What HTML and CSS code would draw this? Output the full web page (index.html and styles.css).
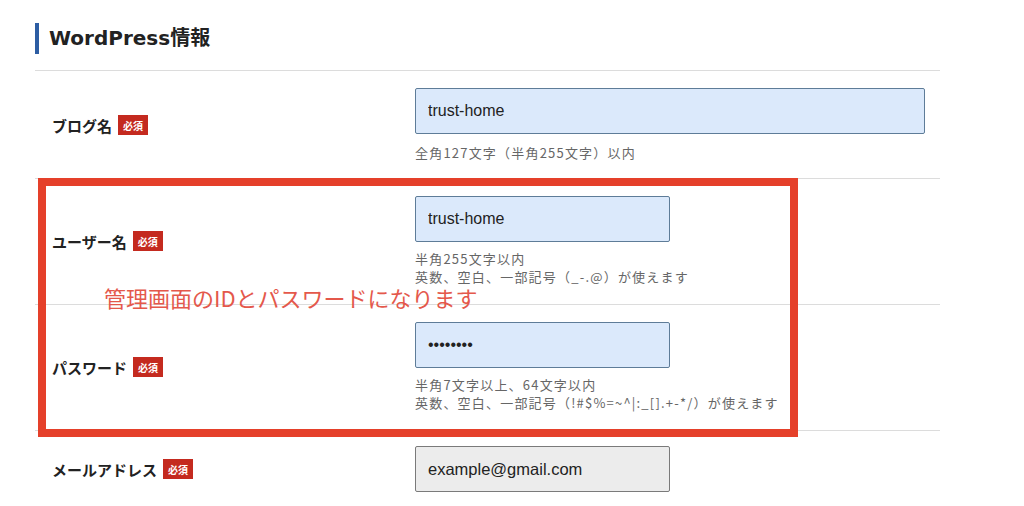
FILE: index.html
```html
<!DOCTYPE html>
<html>
<head>
    <title>WordPress情報</title>
    <link rel="stylesheet" href="styles.css">
</head>
<body>
    <div class="page">
        <h2 class="section-title">WordPress情報</h2>

        <div class="form">
            <div class="row">
                <div class="label">ブログ名<span class="req">必須</span></div>
                <div class="field">
                    <input class="input wide" type="text" value="trust-home">
                    <p class="hint single">全角127文字（半角255文字）以内</p>
                </div>
            </div>

            <div class="row">
                <div class="label">ユーザー名<span class="req">必須</span></div>
                <div class="field">
                    <input class="input" type="text" value="trust-home">
                    <p class="hint">半角255文字以内<br>英数、空白、一部記号（_-.@）が使えます</p>
                </div>
            </div>

            <div class="row">
                <div class="label">パスワード<span class="req">必須</span></div>
                <div class="field">
                    <input class="input" type="password" value="password">
                    <p class="hint">半角7文字以上、64文字以内<br>英数、空白、一部記号（!#$%=~^|:_[].+-*/）が使えます</p>
                </div>
            </div>

            <div class="row last">
                <div class="label">メールアドレス<span class="req">必須</span></div>
                <div class="field">
                    <input class="input locked" type="text" value="example@gmail.com" readonly>
                </div>
            </div>
        </div>
    </div>

    <!-- annotation drawn over the form -->
    <div class="callout"></div>
    <p class="callout-note">管理画面のIDとパスワードになります</p>
</body>
</html>
```

FILE: styles.css
```css
body {
    margin: 0;
    background-color: #fff;
    color: #222;
    font-family: 'Noto Sans CJK JP', 'Noto Sans', sans-serif;
    position: relative;
    overflow: hidden;
}

.page {
    width: 905px;
    margin-left: 35px;
    padding-top: 23px;
}

/* Section heading with the blue bar */
.section-title {
    margin: 0 0 16px;
    padding-left: 10px;
    border-left: 4px solid #2d5da3;
    font-family: 'DejaVu Sans', 'Noto Sans CJK JP', sans-serif;
    font-size: 20px;
    font-weight: 700;
    line-height: 31px;
    color: #222;
}

.form {
    border-top: 1px solid #dcdcdc;
}

.row {
    display: grid;
    grid-template-columns: 380px 1fr;
    padding: 17px 0 18px;
    border-bottom: 1px solid #dcdcdc;
}

.row:first-child {
    padding-bottom: 16px;
}

.row.last {
    padding-top: 15px;
    border-bottom: none;
}

.label {
    display: flex;
    align-items: center;
    padding-left: 17px;
    font-size: 15px;
    font-weight: 700;
    color: #222;
}

.req {
    display: inline-flex;
    align-items: center;
    justify-content: center;
    width: 30px;
    height: 20px;
    margin-left: 6px;
    background-color: #c42a1f;
    color: #fff;
    font-size: 10px;
    font-weight: 700;
}

.input {
    display: block;
    box-sizing: border-box;
    width: 255px;
    height: 46px;
    margin: 0;
    padding: 0 12px;
    border: 1px solid #5e7c98;
    border-radius: 2px;
    background-color: #dbe9fb;
    font-family: 'Liberation Sans', Arial, sans-serif;
    font-size: 16px;
    color: #222;
    outline: none;
}

.input.wide {
    width: 510px;
}

.input.locked {
    background-color: #ececec;
    border-color: #7a7a7a;
    font-size: 16.5px;
}

.hint {
    margin: 8px 0 0;
    font-size: 13px;
    line-height: 18px;
    letter-spacing: 1.2px;
    color: #666;
}

.hint.single {
    margin-top: 10px;
}

/* Red annotation box and note */
.callout {
    position: absolute;
    left: 38px;
    top: 178px;
    width: 760px;
    height: 259px;
    box-sizing: border-box;
    border: 8px solid #e5402a;
}

.callout-note {
    position: absolute;
    left: 104px;
    top: 284px;
    margin: 0;
    font-size: 22px;
    font-weight: 400;
    line-height: 26px;
    color: #e4584b;
}
```
